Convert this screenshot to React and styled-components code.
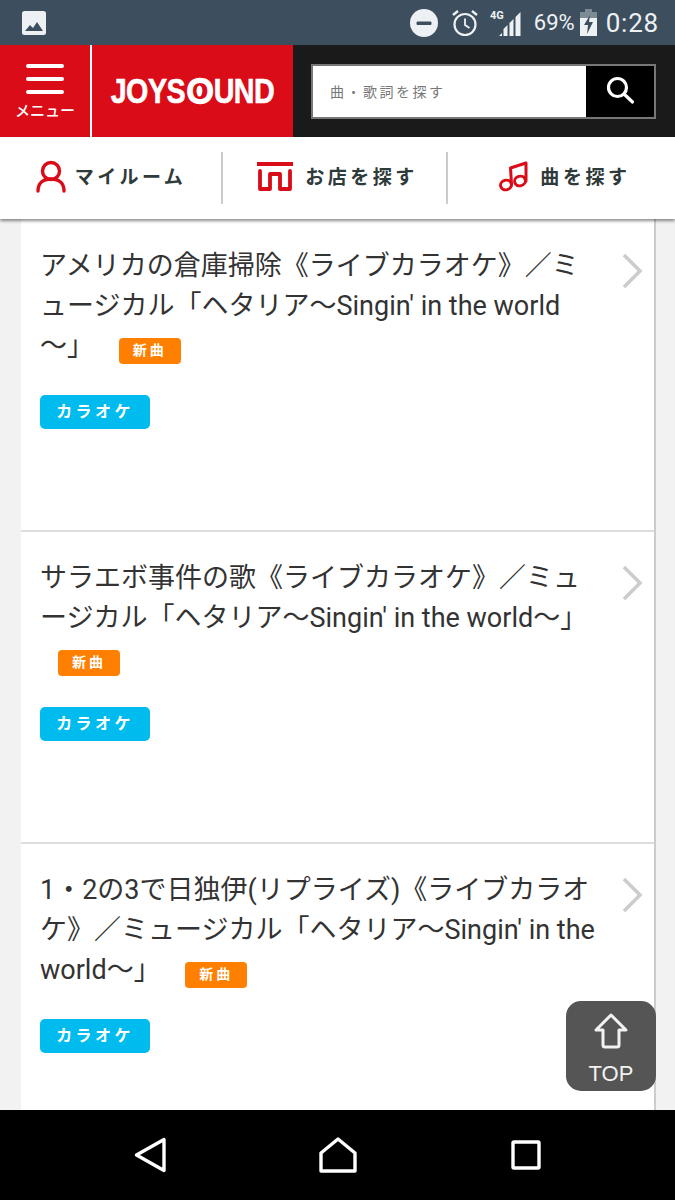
import React from "react";
import styled, { createGlobalStyle } from "styled-components";

const Global = createGlobalStyle`
  html, body { margin: 0; padding: 0; background: #f2f2f2; }
  * { box-sizing: border-box; }
`;
const CJK = `Roboto, "Noto Sans CJK JP", sans-serif`;

const Page = styled.div`
  position: relative; width: 675px; height: 1200px; overflow: hidden;
  display: flex; flex-direction: column; font-family: ${CJK}; background: #f2f2f2;
`;
const StatusBar = styled.div`
  height: 45px; flex: none; background: #3d4f5f; color: #eef1f4;
  display: flex; align-items: center; padding: 0 16px 0 22px;
`;
const StatusSpacer = styled.div`flex: 1;`;
const Percent = styled.span`font-size: 22px; margin: 0 5px 0 8px;`;
const Clock = styled.span`font-size: 26px; margin-left: 9px; letter-spacing: .8px;`;
const StatusSvg = styled.svg`display: block; margin-left: ${p => p.$ml || 0}px;`;

const Header = styled.header`height: 92px; flex: none; display: flex; background: #1a1a1a;`;
const Brand = styled.div`width: 293px; background: #d90c17; display: flex;`;
const MenuBtn = styled.div`
  width: 92px; border-right: 2px solid #fff; display: flex; flex-direction: column;
  align-items: center; color: #fff; padding-top: 19px; flex: none;
`;
const MenuBar = styled.span`
  display: block; width: 38px; height: 4px; border-radius: 2px; background: #fff; margin-bottom: 9px;
`;
const MenuLabel = styled.span`font-size: 15px; font-weight: 500; line-height: 18px; margin-top: -1px; white-space: nowrap;`;
const Logo = styled.div`
  flex: 1; display: flex; align-items: center; justify-content: center; color: #fff;
  font-family: "Liberation Sans", sans-serif; font-weight: 700; font-size: 35px; letter-spacing: -.6px;
  transform: scaleX(.82); -webkit-text-stroke: .6px #fff;
`;
const LogoO = styled.span`
  position: relative; display: inline-block; margin: 0 4px; font-weight: 400;
  -webkit-text-stroke: 2.4px #fff; transform: scaleX(1.2);
  &::after {
    content: ""; position: absolute; left: 50%; top: 50%; width: 6px; height: 11px;
    transform: translate(-50%, -50%); background: #fff; border-radius: 50%;
  }
`;
const SearchWrap = styled.div`flex: 1; display: flex; align-items: center; padding: 0 19px 0 18px;`;
const SearchBox = styled.div`
  width: 345px; height: 55px; border: 2px solid #777; display: flex; background: #fff;
`;
const SearchField = styled.div`
  flex: 1; color: #777; font-size: 14px; letter-spacing: 2.5px; display: flex; align-items: center; padding-left: 17px;
  font-family: "Noto Sans CJK JP", sans-serif;
`;
const SearchButton = styled.div`width: 68px; background: #000; display: flex; align-items: center; justify-content: center;`;

const Nav = styled.nav`
  height: 82px; flex: none; background: #fff; display: flex; align-items: center;
  box-shadow: 0 2px 3px rgba(0,0,0,.45); position: relative; z-index: 2;
`;
const NavItem = styled.div`
  width: ${p => p.$w}px; height: 52px; display: flex; align-items: center; justify-content: center; gap: ${p => p.$gap}px;
  border-right: ${p => p.$divider ? "2px solid #ccc" : "none"};
  padding-left: ${p => p.$pl || 0}px;
`;
const NavLabel = styled.span`
  font-size: 19px; font-weight: 700; letter-spacing: ${p => p.$ls}px; color: #2f3a3a; white-space: nowrap;
  font-family: "Noto Sans CJK JP", sans-serif; padding-bottom: 5px;
`;
const NavIcon = styled.svg`display: block; margin-bottom: 3px;`;

const Main = styled.main`
  flex: 1; min-height: 0; overflow: hidden; width: 635px; margin-left: 21px; padding-top: 1px;
  background: #fff; border-right: 2px solid #ccc;
`;
const Item = styled.article`
  height: 312px; border-bottom: 2px solid #ddd; padding: 26px 0 0 19px; position: relative;
`;
const Title = styled.h2`
  margin: 0; width: 560px; height: 119px; font-size: 27px; font-weight: 400; line-height: 40px; color: #333;
  line-break: loose;
`;
const NewBadge = styled.span`
  display: inline-block; vertical-align: 0; width: 62px; height: 26px; margin-left: 18px; border-radius: 4px;
  background: #ff8000; color: #fff; font-size: 14px; font-weight: 700; line-height: 22px; text-align: center; letter-spacing: 3px;
  font-family: "Noto Sans CJK JP", sans-serif;
`;
const KaraokeBadge = styled.div`
  margin-top: 30px; width: 110px; height: 34px; border-radius: 5px; background: #00bbee; color: #fff;
  font-size: 16px; font-weight: 700; line-height: 30px; text-align: center; letter-spacing: 3.4px;
  font-family: "Noto Sans CJK JP", sans-serif;
`;
const Chevron = styled.svg`position: absolute; right: 11px; top: 33px;`;

const TopButton = styled.div`
  position: absolute; left: 566px; top: 1001px; width: 90px; height: 90px; border-radius: 15px; background: #555;
  display: flex; flex-direction: column; align-items: center; color: #f2f2f2; padding-top: 12px;
`;
const TopLabel = styled.span`font-family: "Liberation Sans", sans-serif; font-size: 22px; line-height: 24px; margin-top: 13px;`;
const TopIcon = styled.svg`display: block; flex: none;`;

const BottomBar = styled.div`
  height: 90px; flex: none; background: #000; display: flex; align-items: center;
`;
const BottomSlot = styled.div`
  width: ${p => p.$w}px; display: flex; justify-content: center; flex: none;
`;

const Ic = ({ w, h, children, ...r }) => <svg width={w} height={h} viewBox={`0 0 ${w} ${h}`} fill="none" {...r}>{children}</svg>;

const items = [
  "アメリカの倉庫掃除《ライブカラオケ》／ミュージカル「ヘタリア～Singin' in the world～」",
  "サラエボ事件の歌《ライブカラオケ》／ミュージカル「ヘタリア～Singin' in the world～」",
  "1・2の3で日独伊(リプライズ)《ライブカラオケ》／ミュージカル「ヘタリア～Singin' in the world～」",
];

export default function App() {
  return (
    <Page>
      <Global />
      <StatusBar>
        <Ic w={24} h={24}>
          <rect width="24" height="24" rx="2.5" fill="#eef1f4" />
          <path d="M3 20l5-6 3 3 4-6 6 9z" fill="#3d4f5f" />
        </Ic>
        <StatusSpacer />
        <StatusSvg width="28" height="28" viewBox="0 0 28 28">
          <circle cx="14" cy="14" r="14" fill="#eef1f4" />
          <rect x="6.5" y="12.5" width="15" height="3.4" rx="1.2" fill="#3d4f5f" />
        </StatusSvg>
        <StatusSvg $ml={13} width="28" height="28" viewBox="0 0 28 28" fill="none" stroke="#eef1f4" strokeWidth="2.2">
          <circle cx="14" cy="15.5" r="10.5" />
          <path d="M14 9.5v6.5l4.5 3" strokeWidth="1.8" />
          <path d="M2 6l5-4M26 6l-5-4" strokeWidth="2.4" />
        </StatusSvg>
        <StatusSvg $ml={11} width="36" height="30" viewBox="0 0 36 30">
          <text x="0" y="11" fontSize="11" fontWeight="700" fill="#eef1f4" fontFamily="Roboto, sans-serif">4G</text>
          <path d="M9 28l3-3v3zM13.500 28v-7l4-4v11zM19.500 28V15l4-4v17zM25.500 28V9l5-5v24z" fill="#eef1f4" />
        </StatusSvg>
        <Percent>69%</Percent>
        <StatusSvg width="17" height="27" viewBox="0 0 17 27">
          <path d="M5 0h7v3h5v6H0V3h5z" fill="#7d8b97" />
          <path d="M0 9h17v18H0z" fill="#eef1f4" />
          <path d="M10 6L4 16h4l-1 9 6-12H9z" fill="#3d4f5f" />
        </StatusSvg>
        <Clock>0:28</Clock>
      </StatusBar>

      <Header>
        <Brand>
          <MenuBtn>
            <MenuBar /><MenuBar /><MenuBar />
            <MenuLabel>メニュー</MenuLabel>
          </MenuBtn>
          <Logo>JOYS<LogoO>O</LogoO>UND</Logo>
        </Brand>
        <SearchWrap>
          <SearchBox>
            <SearchField>曲・歌詞を探す</SearchField>
            <SearchButton>
              <Ic w={30} h={30} stroke="#fff" strokeWidth="3.2">
                <circle cx="12.500" cy="11.500" r="9" />
                <path d="M19 18l8.500 8" strokeLinecap="round" />
              </Ic>
            </SearchButton>
          </SearchBox>
        </SearchWrap>
      </Header>

      <Nav>
        <NavItem $w={223} $gap={9} $divider $pl={1}>
          <NavIcon width="30" height="33" viewBox="0 0 30 33" fill="none" stroke="#d90c17" strokeWidth="3.4" strokeLinecap="round">
            <circle cx="15" cy="11" r="8.5" />
            <path d="M2 31c0-8 5-12 13-12s13 4 13 12" />
          </NavIcon>
          <NavLabel $ls={3.4}>マイルーム</NavLabel>
        </NavItem>
        <NavItem $w={225} $gap={12} $divider $pl={6}>
          <NavIcon width="36" height="29" viewBox="0 0 36 29" fill="none" stroke="#d90c17" strokeWidth="3.8">
            <path d="M0 2h36" />
            <path d="M3 9v18h10V12h10v15h10V9" strokeLinejoin="round" strokeLinecap="round" />
          </NavIcon>
          <NavLabel $ls={3.5}>お店を探す</NavLabel>
        </NavItem>
        <NavItem $w={227} $gap={12} $pl={7}>
          <NavIcon width="29" height="31" viewBox="0 0 29 31" fill="none" stroke="#d90c17" strokeWidth="3">
            <ellipse cx="7" cy="24" rx="5.500" ry="4.800" transform="rotate(-15 7 24)" />
            <ellipse cx="21" cy="20" rx="5.500" ry="4.800" transform="rotate(-15 21 20)" />
            <path d="M12.500 23L11.500 7 27 2v18" strokeLinejoin="round" strokeLinecap="round" />
          </NavIcon>
          <NavLabel $ls={3.6}>曲を探す</NavLabel>
        </NavItem>
      </Nav>

      <Main>
        {items.map(t => (
          <Item key={t}>
            <Title>{t} <NewBadge>新曲</NewBadge></Title>
            <KaraokeBadge>カラオケ</KaraokeBadge>
            <Chevron width="21" height="36" viewBox="0 0 21 36" fill="none" stroke="#ccc" strokeWidth="3.6">
              <path d="M2 2l16 16L2 34" />
            </Chevron>
          </Item>
        ))}
      </Main>

      <TopButton>
        <TopIcon width="34" height="36" viewBox="0 0 34 36" fill="none" stroke="#f2f2f2" strokeWidth="3" strokeLinejoin="round" strokeLinecap="round">
          <path d="M2 17L17 2l15 15H25v15a2 2 0 0 1-2 2H11a2 2 0 0 1-2-2V17z" />
        </TopIcon>
        <TopLabel>TOP</TopLabel>
      </TopButton>

      <BottomBar>
        <BottomSlot $w={300}>
          <Ic w={32} h={36} stroke="#fff" strokeWidth="3.4" strokeLinejoin="round">
            <path d="M2.500 18L30 2.500v31z" />
          </Ic>
        </BottomSlot>
        <BottomSlot $w={76}>
          <Ic w={38} h={36} stroke="#fff" strokeWidth="3.4" strokeLinejoin="round">
            <path d="M2 16L19 2l17 14v18H2z" />
          </Ic>
        </BottomSlot>
        <BottomSlot $w={299}>
          <Ic w={30} h={30} stroke="#fff" strokeWidth="3.4" strokeLinejoin="round">
            <rect x="2" y="2" width="26" height="26" rx="1" />
          </Ic>
        </BottomSlot>
      </BottomBar>
    </Page>
  );
}
